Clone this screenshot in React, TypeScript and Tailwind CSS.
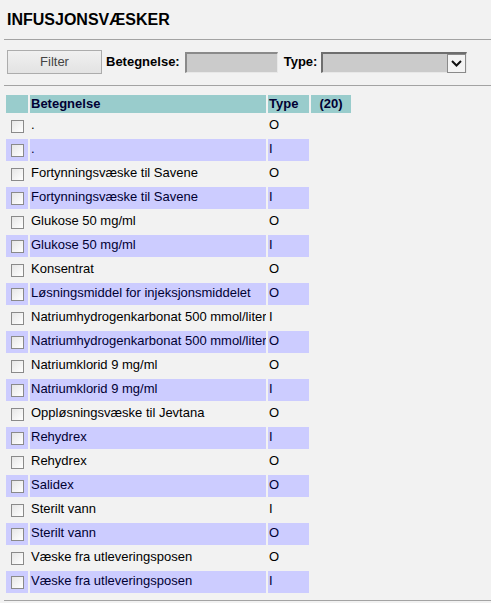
import React from 'react';

type Row = { name: string; type: string };

const rows: Row[] = [
  { name: '.', type: 'O' },
  { name: '.', type: 'I' },
  { name: 'Fortynningsvæske til Savene', type: 'O' },
  { name: 'Fortynningsvæske til Savene', type: 'I' },
  { name: 'Glukose 50 mg/ml', type: 'O' },
  { name: 'Glukose 50 mg/ml', type: 'I' },
  { name: 'Konsentrat', type: 'O' },
  { name: 'Løsningsmiddel for injeksjonsmiddelet', type: 'O' },
  { name: 'Natriumhydrogenkarbonat 500 mmol/liter', type: 'I' },
  { name: 'Natriumhydrogenkarbonat 500 mmol/liter', type: 'O' },
  { name: 'Natriumklorid 9 mg/ml', type: 'O' },
  { name: 'Natriumklorid 9 mg/ml', type: 'I' },
  { name: 'Oppløsningsvæske til Jevtana', type: 'O' },
  { name: 'Rehydrex', type: 'I' },
  { name: 'Rehydrex', type: 'O' },
  { name: 'Salidex', type: 'O' },
  { name: 'Sterilt vann', type: 'I' },
  { name: 'Sterilt vann', type: 'O' },
  { name: 'Væske fra utleveringsposen', type: 'O' },
  { name: 'Væske fra utleveringsposen', type: 'I' },
];

const Checkbox = () => (
  <div className="h-[13px] w-[13px] border border-[#8a8a8a] bg-gradient-to-br from-[#e6e6e6] to-white" />
);

const App = () => {
  return (
    <div className="min-h-screen bg-[#f2f2f2] pl-1 font-['Liberation_Sans',Arial,sans-serif] text-black">
      <h1 className="ml-[3px] pt-3 text-[16px] font-bold leading-4">INFUSJONSVÆSKER</h1>

      <div className="mt-[11px] h-px bg-[#a3a3a3]" />

      <div className="mt-[10px] flex h-6 items-center">
        <button className="ml-[3px] h-6 w-[95px] border border-[#acacac] bg-gradient-to-b from-[#f0f0f0] to-[#e3e3e3] text-[13px] text-[#444]">
          Filter
        </button>
        <span className="ml-1 text-[13px] font-bold">Betegnelse:</span>
        <div className="ml-[5px] h-[21px] w-[93px] border-t-2 border-l-2 border-b border-r border-t-[#8a8a8a] border-l-[#8a8a8a] border-b-[#e8e8e8] border-r-[#e8e8e8] bg-[#cbcbcb]" />
        <span className="ml-[6px] text-[13px] font-bold">Type:</span>
        <div className="ml-[4px] flex h-[21px] w-[146px] justify-end border-t-2 border-l-2 border-b border-r border-t-[#6e6e6e] border-l-[#6e6e6e] border-b-[#e8e8e8] border-r-[#e8e8e8] bg-[#cbcbcb]">
          <div className="flex h-[19px] w-[19px] items-center justify-center border border-[#8a8a8a] bg-[#f4f4f4]">
            <svg width="11" height="7" viewBox="0 0 11 7">
              <path d="M1 1l4.5 4.5L10 1" fill="none" stroke="#111" strokeWidth="2" />
            </svg>
          </div>
        </div>
      </div>

      <div className="mt-[11px] h-px bg-[#a3a3a3]" />

      <div className="ml-[2px] mt-[9px] flex flex-col gap-[2px]">
        <div className="flex h-[18px] gap-[2px] text-[13px] font-bold leading-[18px] text-[#000033]">
          <div className="w-[22px] bg-[#99cccc]" />
          <div className="w-[236px] bg-[#99cccc] pl-px">Betegnelse</div>
          <div className="w-[41px] bg-[#99cccc] pl-px">Type</div>
          <div className="w-[40px] bg-[#99cccc] text-center">(20)</div>
        </div>
        {rows.map((r, i) => {
          const alt = i % 2 === 1;
          const cell = alt ? 'bg-[#ccccff] text-[#000033]' : 'text-black';
          return (
            <div key={i} className="flex h-[22px] gap-[2px] text-[13px] leading-[15px]">
              <div className={`flex w-[22px] items-center justify-center ${cell}`}>
                <Checkbox />
              </div>
              <div className={`w-[236px] overflow-hidden whitespace-nowrap pl-px pt-[2px] ${cell}`}>{r.name}</div>
              <div className={`w-[41px] pl-px pt-[2px] ${cell}`}>{r.type}</div>
            </div>
          );
        })}
      </div>

      <div className="mt-[7px] h-px bg-[#a3a3a3]" />
    </div>
  );
};

export default App;
